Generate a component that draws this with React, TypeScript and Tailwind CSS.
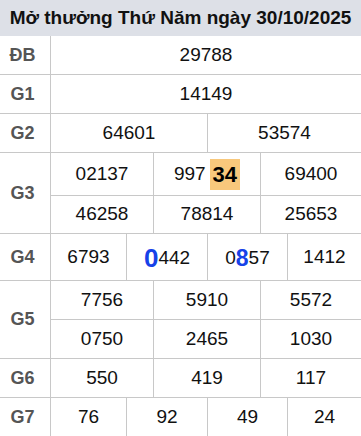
const cell = "bg-white flex items-center justify-center text-[19px] text-[#111]";
const label = "bg-white flex items-center justify-center pr-[5px] text-[18px] font-bold text-[#555]";

const App = () => {
  return (
    <div
      className="w-[361px] h-[436px] overflow-hidden bg-white"
      style={{ fontFamily: '"Liberation Sans", Arial, sans-serif' }}
    >
      <div className="h-[36px] bg-[#dde0e7] flex items-center justify-center whitespace-nowrap text-[19px] font-bold text-[#111]">
        Mở thưởng Thứ Năm ngày 30/10/2025
      </div>
      <div className="grid grid-cols-[50px_75px_26px_53px_52px_26px_1fr] grid-rows-[38px_38px_38px_42px_37px_46px_38px_38px_38px_38px] gap-px bg-[#c8c8c8]">
        {/* DB */}
        <div className={label}>ĐB</div>
        <div className={`${cell} col-span-6`}>29788</div>

        {/* G1 */}
        <div className={label}>G1</div>
        <div className={`${cell} col-span-6`}>14149</div>

        {/* G2 */}
        <div className={label}>G2</div>
        <div className={`${cell} col-span-3`}>64601</div>
        <div className={`${cell} col-span-3`}>53574</div>

        {/* G3 */}
        <div className={`${label} row-span-2`}>G3</div>
        <div className={`${cell} col-span-2`}>02137</div>
        <div className={`${cell} col-span-2`}>
          <span>997</span>
          <span className="ml-[4px] bg-[#f8c87c] px-[3px] py-[2px] text-[22px] font-bold leading-[27px] text-black">
            34
          </span>
        </div>
        <div className={`${cell} col-span-2`}>69400</div>
        <div className={`${cell} col-span-2`}>46258</div>
        <div className={`${cell} col-span-2`}>78814</div>
        <div className={`${cell} col-span-2`}>25653</div>

        {/* G4 */}
        <div className={label}>G4</div>
        <div className={cell}>6793</div>
        <div className={`${cell} col-span-2 items-baseline pt-[3px]`}>
          <span className="text-[26px] font-bold text-[#1642e8]">0</span>
          <span>442</span>
        </div>
        <div className={`${cell} col-span-2 items-baseline pt-[3px]`}>
          <span>0</span>
          <span className="text-[23px] font-bold text-[#1642e8]">8</span>
          <span>57</span>
        </div>
        <div className={cell}>1412</div>

        {/* G5 */}
        <div className={`${label} row-span-2`}>G5</div>
        <div className={`${cell} col-span-2`}>7756</div>
        <div className={`${cell} col-span-2`}>5910</div>
        <div className={`${cell} col-span-2`}>5572</div>
        <div className={`${cell} col-span-2`}>0750</div>
        <div className={`${cell} col-span-2`}>2465</div>
        <div className={`${cell} col-span-2`}>1030</div>

        {/* G6 */}
        <div className={label}>G6</div>
        <div className={`${cell} col-span-2`}>550</div>
        <div className={`${cell} col-span-2`}>419</div>
        <div className={`${cell} col-span-2`}>117</div>

        {/* G7 */}
        <div className={label}>G7</div>
        <div className={cell}>76</div>
        <div className={`${cell} col-span-2`}>92</div>
        <div className={`${cell} col-span-2`}>49</div>
        <div className={cell}>24</div>
      </div>
    </div>
  );
};

export default App;
